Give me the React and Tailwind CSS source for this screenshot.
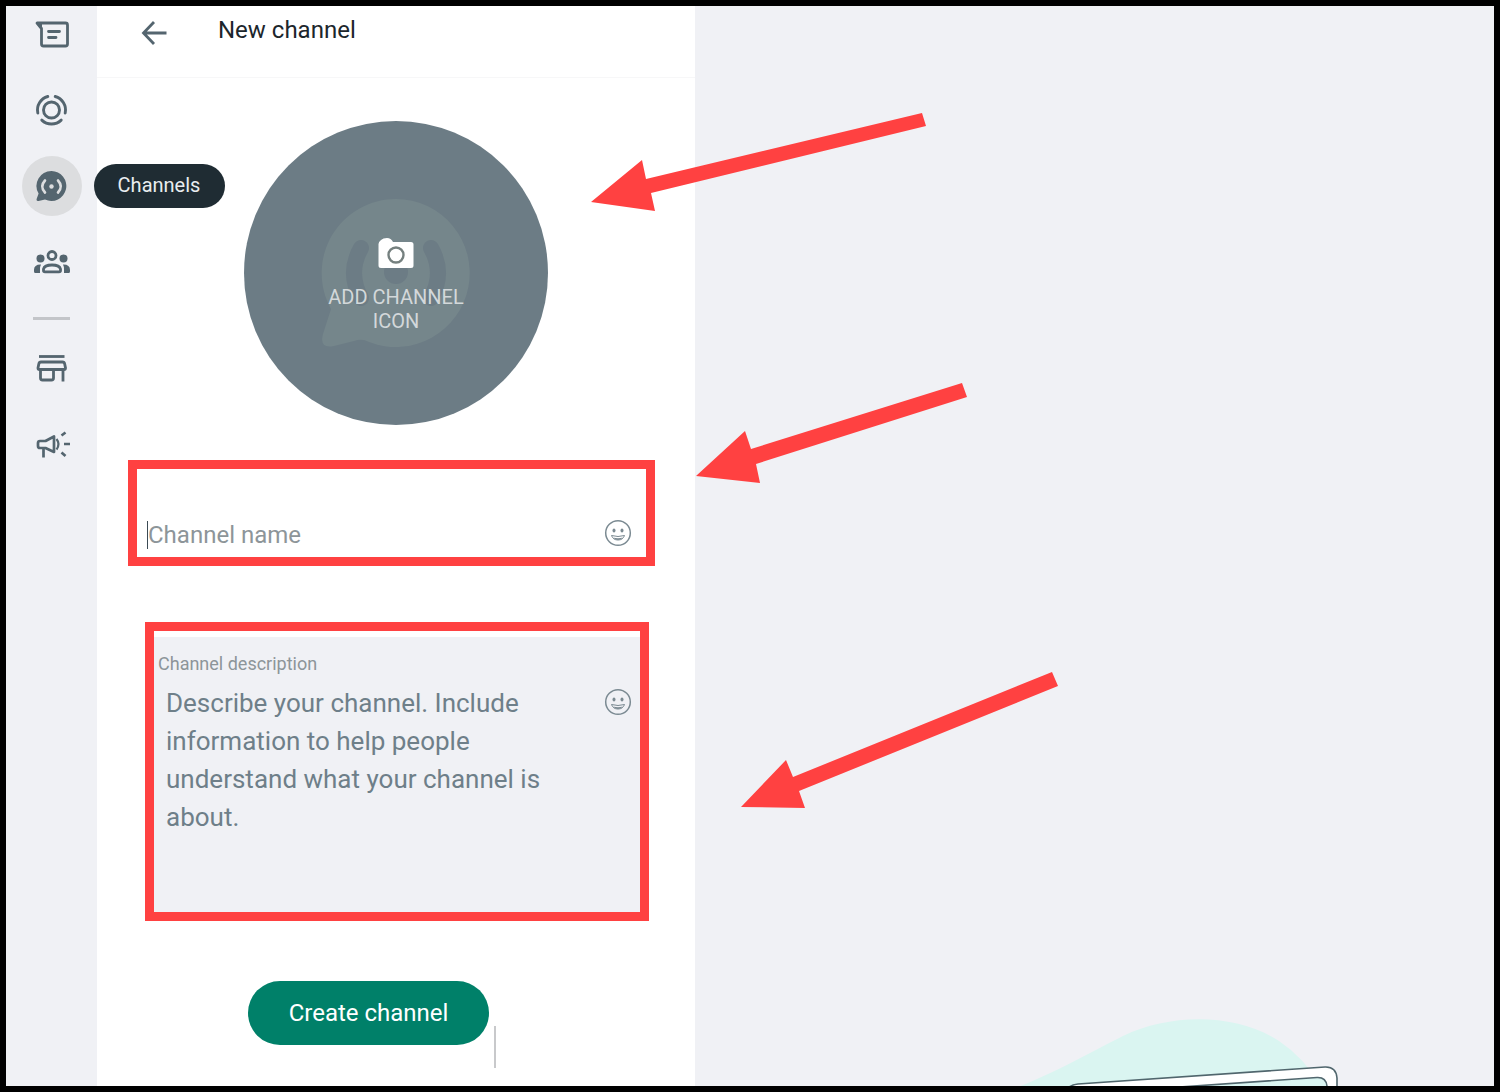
import React, { useState } from 'react';

const ChatIcon = () => (
  <svg width="40" height="40" viewBox="0 0 40 40" fill="none" stroke="#54656f" strokeWidth="2.8" strokeLinejoin="round" strokeLinecap="round">
    <path d="M5 9H33.500Q35.500 9 35.500 11V30Q35.500 32 33.500 32H11.500Q9.500 32 9.500 30V14.500Z" />
    <path d="M5 9L9.500 15V9Z" fill="#54656f" strokeWidth="1" />
    <path d="M16.500 17.500H27.500M16.500 23.500H24" />
  </svg>
);

const StatusIcon = () => (
  <svg width="40" height="40" viewBox="0 0 40 40" fill="none" stroke="#54656f" strokeWidth="2.9" strokeLinecap="round">
    <circle cx="19.500" cy="20" r="8" />
    <path d="M15.800 6.500A14 14 0 0 0 5.800 23M23.200 6.500A14 14 0 0 1 33.200 23M9.800 30.100A14 14 0 0 0 29.200 30.100" />
  </svg>
);

const ChannelsIcon = () => (
  <svg width="40" height="40" viewBox="0 0 40 40">
    <path d="M19.500 5A15 15 0 1 1 13 33.600Q10 34.300 6.500 35Q4 35.300 4.700 32.800L6.600 27.600A15 15 0 0 1 19.500 5Z" fill="#54656f" />
    <circle cx="19.500" cy="20.500" r="2.200" fill="#dcdddf" />
    <path d="M13 14.500Q7.500 20.500 13 26.500M26 14.500Q31.500 20.500 26 26.500" fill="none" stroke="#dcdddf" strokeWidth="2.600" strokeLinecap="round" />
  </svg>
);

const CommunityIcon = () => (
  <svg width="40" height="40" viewBox="0 0 40 40">
    <g fill="#54656f">
      <circle cx="8.500" cy="16.500" r="4" />
      <circle cx="31.500" cy="16.500" r="4" />
      <path d="M8.500 22.500Q2 22.500 2 28V29.500Q2 31 3.500 31H8V27Q8 24.500 9 22.500ZM31.500 22.500Q38 22.500 38 28V29.500Q38 31 36.500 31H32V27Q32 24.500 31 22.500Z" />
    </g>
    <g fill="none" stroke="#54656f" strokeWidth="2.800">
      <circle cx="20" cy="13.500" r="4" />
      <path d="M11.500 27Q12.500 23 20 23T28.500 27V28.500Q28.500 29.800 27 29.800H13Q11.500 29.800 11.500 28.500Z" />
    </g>
  </svg>
);

const StoreIcon = () => (
  <svg width="40" height="40" viewBox="0 0 40 40" fill="none" stroke="#54656f" strokeWidth="2.8">
    <path d="M7 8.500H32.500" />
    <path d="M9 14H30.500Q32.300 14 32.700 16L33.500 20Q33.500 21.500 32 21.500H7.500Q6 21.500 6 20L6.800 16Q7.200 14 9 14Z" />
    <path d="M8.500 21.500V30Q8.500 32 10.500 32H19.500Q21.500 32 21.500 30V21.500M31 21.500V33.500" />
  </svg>
);

const MegaphoneIcon = () => (
  <svg width="40" height="40" viewBox="0 0 40 40" fill="none" stroke="#54656f" strokeWidth="2.7" strokeLinejoin="round">
    <path d="M8 17H13.500L22 12.500V28L13.500 24H8Q6 24 6 22V19Q6 17 8 17ZM11.500 24V33.500" />
    <path d="M24.500 15Q28.500 20 24.500 25.500" strokeWidth="2.200" />
    <path d="M29.500 11.500L33.500 8.500M32 20H38M29.500 28.500L33.500 32" />
  </svg>
);

const BackIcon = () => (
  <svg width="26" height="26" viewBox="0 0 26 26" fill="none" stroke="#54656f" strokeWidth="2.8">
    <path d="M13 2L2.500 13L13 24M2.500 13H25.500" />
  </svg>
);

const CameraIcon = () => (
  <svg width="36" height="32" viewBox="0 0 36 32">
    <path d="M3 3Q5 1 9 1T15 5H33Q35.500 5 35.500 7.500V28.500Q35.500 31 33 31H3Q.5 31 .5 28.500V7Q.5 5 3 3Z" fill="#fff" />
    <circle cx="18" cy="18" r="7.500" fill="none" stroke="#75807f" strokeWidth="2.400" />
  </svg>
);

const SmileIcon = () => (
  <svg width="28" height="28" viewBox="0 0 28 28">
    <circle cx="14" cy="14" r="12.300" fill="none" stroke="#7b8a92" strokeWidth="1.500" />
    <ellipse cx="10" cy="11.500" rx="1.500" ry="1.900" fill="#7b8a92" />
    <ellipse cx="18" cy="11.500" rx="1.500" ry="1.900" fill="#7b8a92" />
    <path d="M7.500 16.500Q14 18.500 20.500 16.500Q19 21 14 21T7.500 16.500Z" fill="none" stroke="#7b8a92" strokeWidth="1" />
    <path d="M9 18.600Q14 20 19 18.600Q17 21 14 21T9 18.600Z" fill="#7b8a92" />
  </svg>
);

const AvatarBubble = () => (
  <svg className="absolute inset-0" width="304" height="304" viewBox="0 0 304 304">
    <path d="M152 78A74 74 0 1 1 125 221Q118 217 110 220L90 225Q75 228 79 213L87 188A74 74 0 0 1 152 78Z" fill="#75868b" />
    <circle cx="152" cy="151" r="12" fill="#6c7c85" />
    <path d="M117 127Q103 152 117 177M187 127Q201 152 187 177" fill="none" stroke="#6c7c85" strokeWidth="16" strokeLinecap="round" />
  </svg>
);

const LaptopArt = () => (
  <svg className="mx-auto block" width="600" height="72" viewBox="794 1014 600 72">
    <path d="M1010 1090C1060 1070 1082 1056 1122 1036C1170 1013 1235 1013 1278 1041Q1305 1059 1322 1090Z" fill="#daf5f1" />
    <path d="M1066 1090Q1068 1085 1077 1084L1324 1067Q1335 1066.500 1336 1078V1090Z" fill="#fff" stroke="#50666d" strokeWidth="1.600" />
    <path d="M1150 1089L1316 1077.500Q1325 1077 1326 1086V1090H1150Z" fill="#daf5f1" stroke="#50666d" strokeWidth="1.600" />
  </svg>
);

const Arrows = () => (
  <svg className="pointer-events-none absolute top-0 left-0" width="1110" height="820" viewBox="6 6 1110 820" fill="#ff4141" aria-hidden="true">
    <path d="M591 202L642 160L646 179L922 113L926 126L651 193L655 211Z" />
    <path d="M696 476L745 431L751 449L962 383L967 397L756 464L760 483Z" />
    <path d="M741 807L786 760L793 777L1052 672L1058 686L799 791L805 808Z" />
  </svg>
);

const mainItems = [
  { label: 'Chats', icon: ChatIcon },
  { label: 'Status', icon: StatusIcon },
  { label: 'Channels', icon: ChannelsIcon, active: true },
  { label: 'Communities', icon: CommunityIcon },
];

const businessItems = [
  { label: 'Catalog', icon: StoreIcon },
  { label: 'Advertise', icon: MegaphoneIcon },
];

const NavButton = ({ item }) => {
  const Icon = item.icon;
  return (
    <div className="relative">
      <button
        type="button"
        aria-label={item.label}
        className={`flex size-[60px] items-center justify-center rounded-full ${item.active ? 'bg-[#dcdddf]' : ''}`}
      >
        <Icon />
      </button>
      {item.active && (
        <span className="absolute top-2 left-[72px] z-10 flex h-11 w-[131px] items-center justify-center rounded-full bg-[#1f2c33] pb-0.5 text-xl text-[#e9edef]">
          {item.label}
        </span>
      )}
    </div>
  );
};

const Sidebar = () => (
  <nav className="-mt-0.5 flex w-[91px] shrink-0 flex-col items-center gap-4">
    {mainItems.map((item) => (
      <NavButton key={item.label} item={item} />
    ))}
    <hr className="mt-[9px] mb-0.5 h-[3px] w-[37px] border-0 bg-[#c3c5c9]" />
    {businessItems.map((item) => (
      <NavButton key={item.label} item={item} />
    ))}
  </nav>
);

const NewChannelForm = () => {
  const [name, setName] = useState('');
  const [description, setDescription] = useState('');

  return (
    <form className="pt-[35px]" onSubmit={(e) => e.preventDefault()}>
      <div className="mx-[31px] flex h-[106px] w-[527px] items-end border-9 border-[#ff4141] pr-3.5 pb-2 pl-2.5">
        <input
          type="text"
          aria-label="Channel name"
          placeholder="Channel name"
          value={name}
          onChange={(e) => setName(e.target.value)}
          className="h-7 min-w-0 flex-1 border-l border-[#3b4a54] text-2xl leading-7 text-[#3b4a54] outline-none placeholder:text-[#8d9599]"
        />
        <button type="button" aria-label="Emoji" className="pb-0.5">
          <SmileIcon />
        </button>
      </div>

      <div className="mx-12 mt-14 h-[299px] w-[504px] border-9 border-[#ff4141] pt-1.5">
        <div className="h-full bg-[#f0f1f5] px-1 pt-[15px]">
          <label htmlFor="description" className="block text-lg leading-6 text-[#8d9599]">
            Channel description
          </label>
          <div className="mt-2 flex items-start justify-between pr-1 pl-2">
            <textarea
              id="description"
              rows="5"
              placeholder="Describe your channel. Include information to help people understand what your channel is about."
              value={description}
              onChange={(e) => setDescription(e.target.value)}
              className="block w-[410px] resize-none overflow-hidden text-[26px] leading-[38px] text-[#3b4a54] outline-none placeholder:text-[#6e7f89]"
            />
            <button type="button" aria-label="Emoji" className="mt-1">
              <SmileIcon />
            </button>
          </div>
        </div>
      </div>

      <div className="mt-[60px] ml-[151px] flex items-start gap-[5px]">
        <button type="submit" className="h-16 w-[241px] rounded-full bg-[#008069] text-2xl text-white">
          Create channel
        </button>
        <span className="mt-[45px] h-[42px] w-0.5 bg-[#c8c9cb]" />
      </div>
    </form>
  );
};

const App = () => {
  return (
    <div className="relative flex min-h-screen overflow-hidden border-6 border-black bg-[#f0f1f5] font-['Roboto',sans-serif]">
      <Sidebar />

      <section className="w-[598px] shrink-0 bg-white">
        <header className="flex h-[72px] items-start border-b border-[#f7f7f8] pt-2 pl-11">
          <button type="button" aria-label="Back" className="mt-1.5">
            <BackIcon />
          </button>
          <h1 className="ml-[51px] text-2xl leading-8 text-[#1c262c]">New channel</h1>
        </header>
        <div className="flex justify-center pt-[43px]">
          <button
            type="button"
            className="relative flex size-[304px] flex-col items-center overflow-hidden rounded-full bg-[#6c7c85] pt-[116px] text-xl leading-6 text-[#d3d8da]"
          >
            <AvatarBubble />
            <span className="relative">
              <CameraIcon />
            </span>
            <span className="relative mt-4 w-[140px]">ADD CHANNEL ICON</span>
          </button>
        </div>
        <NewChannelForm />
      </section>

      <main className="flex min-w-0 flex-1 flex-col justify-end">
        <LaptopArt />
      </main>

      <Arrows />
    </div>
  );
};

export default App;
